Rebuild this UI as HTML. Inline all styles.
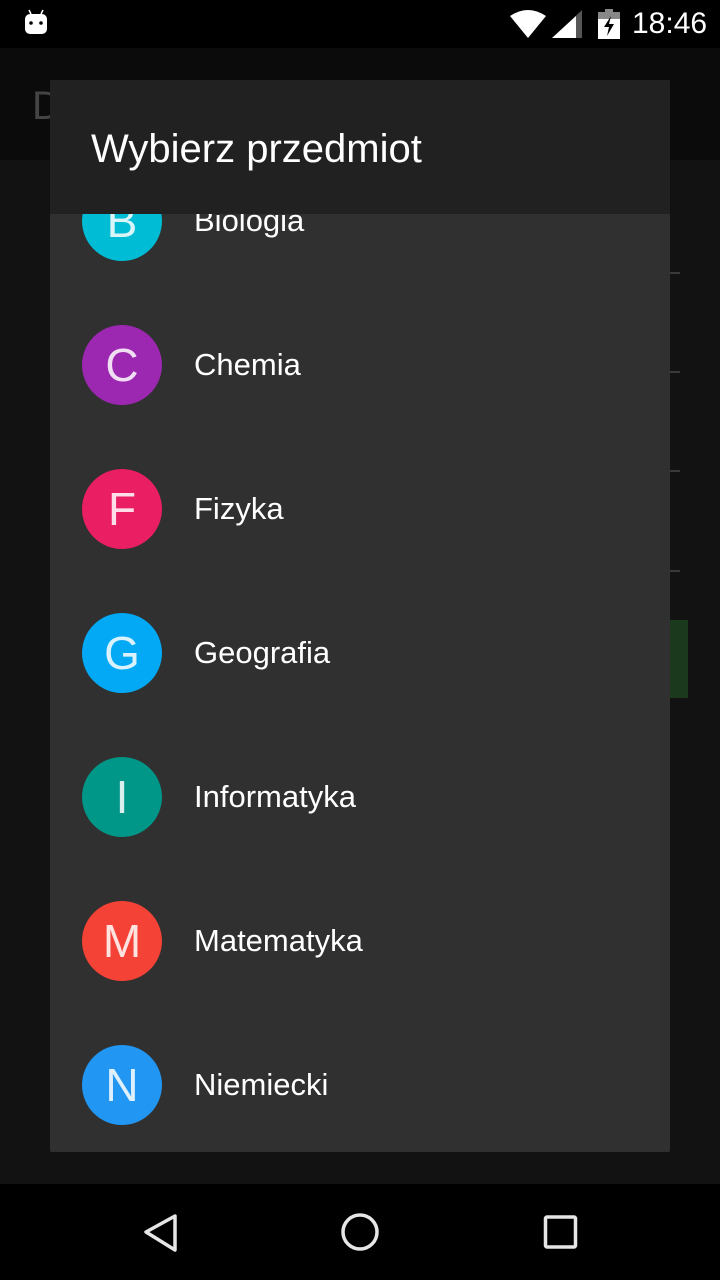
<!DOCTYPE html>
<html><head><meta charset="utf-8"><style>
*{margin:0;padding:0;box-sizing:border-box}
body{width:720px;height:1280px;background:#121212;position:relative;overflow:hidden;font-family:"Liberation Sans",sans-serif}
.abs{position:absolute}
.item{position:absolute;left:50px;width:620px;height:144px}
.circ{position:absolute;left:32px;top:32px;width:80px;height:80px;border-radius:50%;color:rgba(255,255,255,.85);font-size:46px;font-weight:normal;text-align:center;line-height:80px}
.lbl{position:absolute;left:144px;top:52px;color:#fff;font-size:31px;line-height:40px}
</style></head><body>
<div class="abs" style="left:0;top:0;width:720px;height:48px;background:#000"></div>
<svg class="abs" style="left:24px;top:8px" width="24" height="28" viewBox="0 0 24 28"><path d="M5 2l2 4M19 2l-2 4" stroke="#fff" stroke-width="1.5"/><rect x="1" y="6" width="22" height="20" rx="5" fill="#fff"/><circle cx="7" cy="15" r="1.8" fill="#000"/><circle cx="17" cy="15" r="1.8" fill="#000"/></svg>
<svg class="abs" style="left:510px;top:10px" width="36" height="28" viewBox="0 0 36 28"><path d="M0 6 Q18 -6 36 6 L18 28 Z" fill="#fff"/></svg>
<svg class="abs" style="left:552px;top:10px" width="30" height="28" viewBox="0 0 30 28"><path d="M0 28 L30 0 L30 28 Z" fill="#555"/><path d="M0 28 L24 6 L24 28 Z" fill="#fff"/></svg>
<svg class="abs" style="left:598px;top:9px" width="22" height="30" viewBox="0 0 22 30"><rect x="7" y="0" width="8" height="3" fill="#888"/><rect x="0" y="3" width="22" height="7" fill="#888"/><rect x="0" y="10" width="22" height="20" fill="#fff"/><path d="M13 7 L6 18 L11 18 L9 27 L16 15 L11 15 Z" fill="#000"/></svg>
<div class="abs" style="left:632px;top:6px;color:#fff;font-size:30px;line-height:36px">18:46</div>
<div class="abs" style="left:0;top:48px;width:720px;height:112px;background:#0b0b0b"></div>
<div class="abs" style="left:32px;top:84px;color:#444;font-size:40px;line-height:44px">D</div>
<div class="abs" style="left:670px;top:272px;width:10px;height:2px;background:#3a3a3a"></div>
<div class="abs" style="left:670px;top:371px;width:10px;height:2px;background:#3a3a3a"></div>
<div class="abs" style="left:670px;top:470px;width:10px;height:2px;background:#3a3a3a"></div>
<div class="abs" style="left:670px;top:570px;width:10px;height:2px;background:#3a3a3a"></div>
<div class="abs" style="left:670px;top:620px;width:18px;height:78px;background:#1b3a1d"></div>
<div class="abs" style="left:50px;top:80px;width:620px;height:1072px;background:#303030;overflow:hidden;border-radius:2px"></div>
<div class="abs" style="left:50px;top:214px;width:620px;height:938px;overflow:hidden">
  <div style="position:relative;top:-129px">
  <div class="item" style="left:0;top:64px"><div class="circ" style="background:#00bcd4">B</div><div class="lbl">Biologia</div></div>
  <div class="item" style="left:0;top:208px"><div class="circ" style="background:#9c27b0">C</div><div class="lbl">Chemia</div></div>
  <div class="item" style="left:0;top:352px"><div class="circ" style="background:#e91e63">F</div><div class="lbl">Fizyka</div></div>
  <div class="item" style="left:0;top:496px"><div class="circ" style="background:#03a9f4">G</div><div class="lbl">Geografia</div></div>
  <div class="item" style="left:0;top:640px"><div class="circ" style="background:#009688">I</div><div class="lbl">Informatyka</div></div>
  <div class="item" style="left:0;top:784px"><div class="circ" style="background:#f44336">M</div><div class="lbl">Matematyka</div></div>
  <div class="item" style="left:0;top:928px"><div class="circ" style="background:#2196f3">N</div><div class="lbl">Niemiecki</div></div>
  </div>
</div>
<div class="abs" style="left:50px;top:80px;width:620px;height:134px;background:#212121;border-radius:2px 2px 0 0"></div>
<div class="abs" style="left:91px;top:126px;color:#fff;font-size:40px;line-height:46px">Wybierz przedmiot</div>
<div class="abs" style="left:0;top:1184px;width:720px;height:96px;background:#000"></div>
<svg class="abs" style="left:0;top:1184px" width="720" height="96" viewBox="0 0 720 96"><g fill="none" stroke="#e6e6e6" stroke-width="3.5" stroke-linejoin="round"><path d="M175 32 L146 48 L175 66 Z"/><circle cx="360" cy="48" r="17"/><rect x="545.5" y="33" width="30" height="30" rx="1.5"/></g></svg>
</body></html>
